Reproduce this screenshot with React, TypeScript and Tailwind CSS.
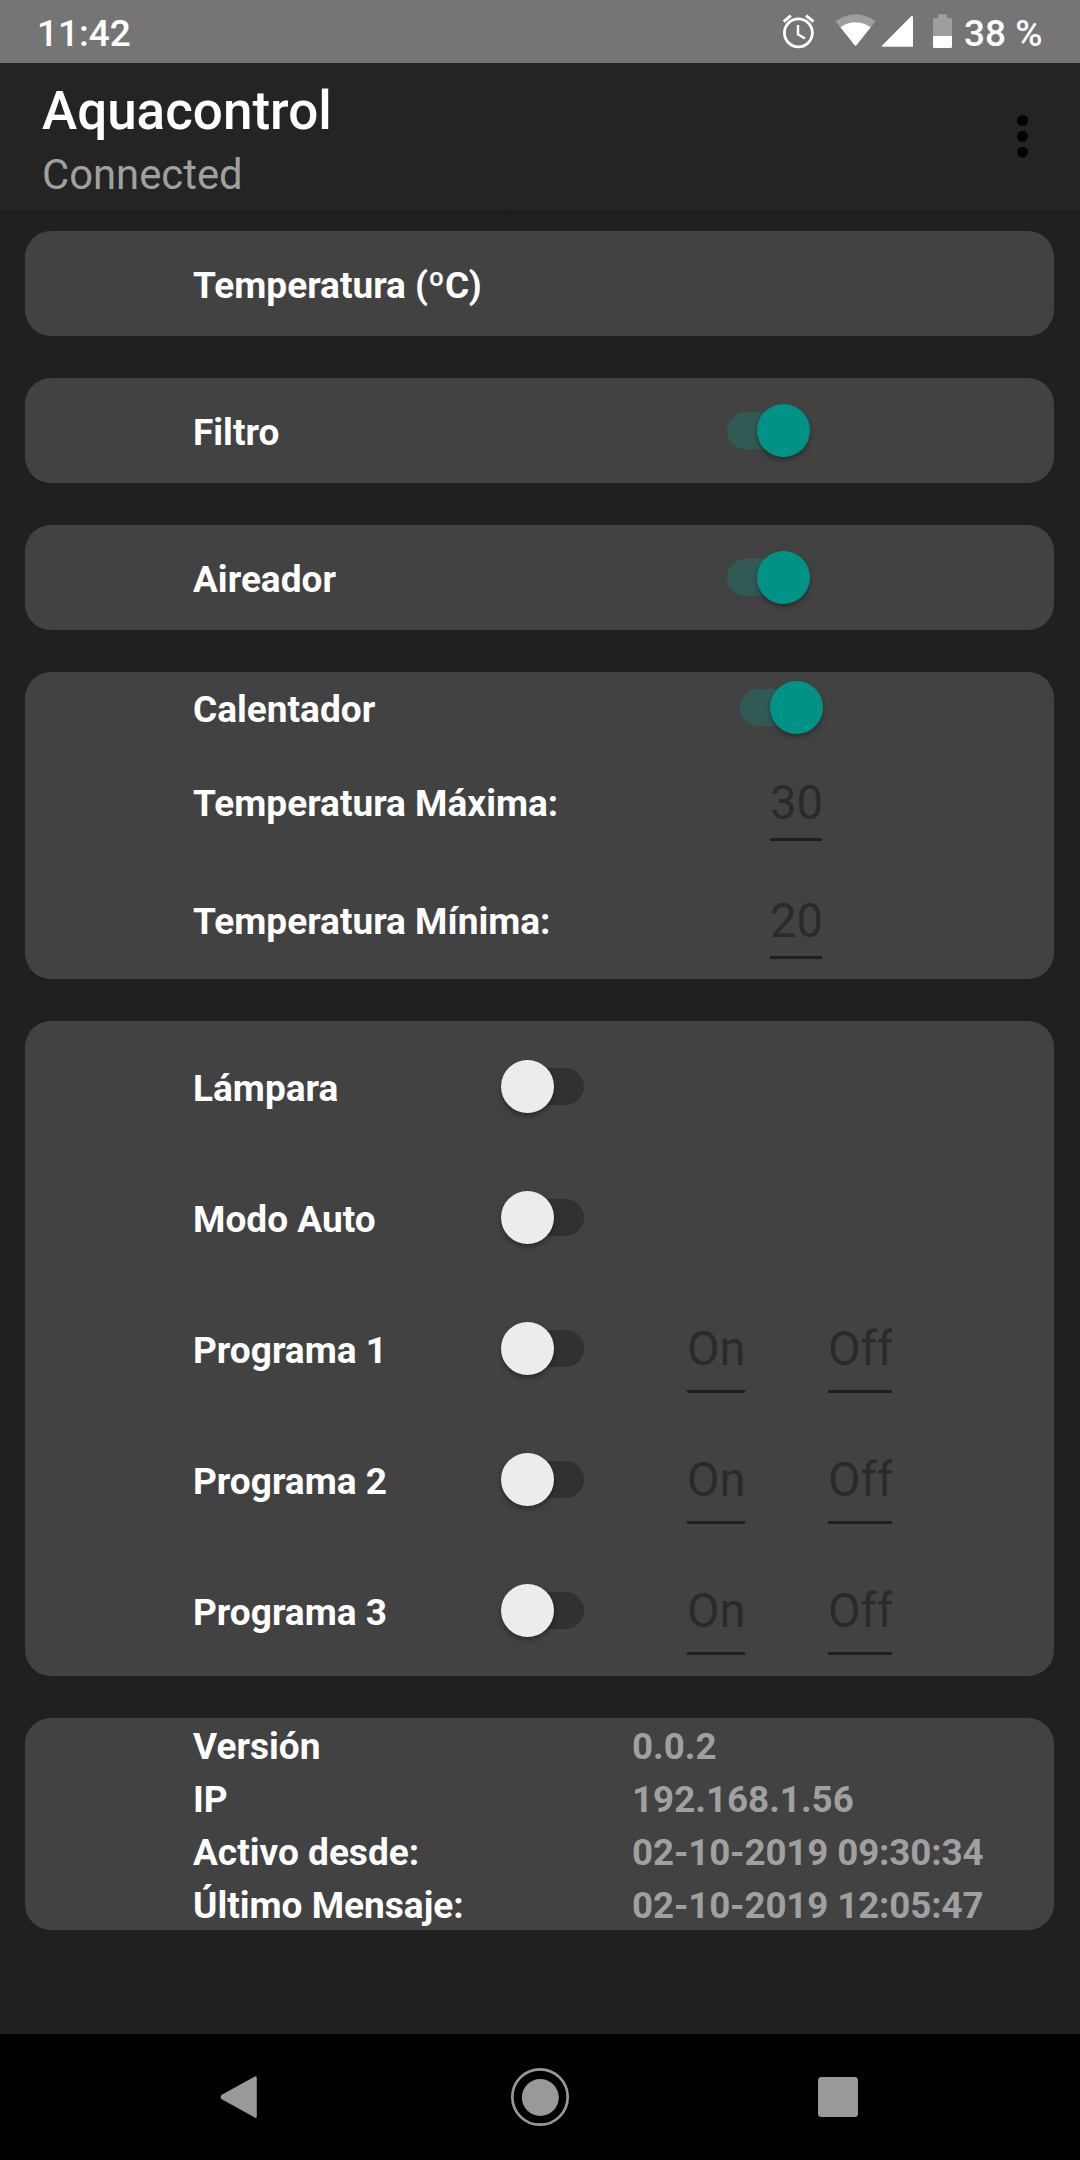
import type { ReactNode } from "react";

function StatusBar() {
  return (
    <div className="flex h-[63px] items-center bg-[#757575] pl-[37px] text-[37px] font-medium leading-[66px] text-white">
      <span className="flex-1 pt-[4px]">11:42</span>
      <svg className="h-[63px] w-[183px]" viewBox="776 0 183 63" fill="none">
        <circle cx="798.4" cy="32.8" r="14" stroke="#fff" strokeWidth="2.8" />
        <path d="M798 25v9.3l7 4.2" stroke="#fff" strokeWidth="2.4" />
        <path d="M783.7 21.6l7.2-6M813.5 21.6l-7.4-6" stroke="#fff" strokeWidth="3" />
        <path d="M835.7 21.4C846.5 12.2 864.700 12.2 875.500 21.4L870.800 27.2C861.700 20.7 849.300 20.700 840.400 27.200Z" fill="#9e9e9e" />
        <path d="M840.400 27.200C849.300 20.700 861.700 20.700 870.800 27.200L856.600 45.100Q855.500 46.300 854.400 45.100Z" fill="#fff" />
        <path d="M911.200 16.300Q913 15.500 913 17.500V46.800H883Q881.300 46.800 882.400 45.200Z" fill="#fff" />
        <path d="M938 14.300H947V18H950.500Q952 18 952 19.500V36H933V19.500Q933 18 934.500 18H938Z" fill="#9e9e9e" />
        <path d="M933 36H952V46.500Q952 48 950.500 48H934.500Q933 48 933 46.500Z" fill="#fff" />
      </svg>
      <span className="w-[121px] whitespace-nowrap pl-[5px] pt-[4px]">38 %</span>
    </div>
  );
}

function AppBar() {
  return (
    <header className="flex h-[147px] items-start justify-between bg-[#242424] pl-[42px] pr-[40px]">
      <div className="pt-[17px]">
        <h1 className="text-[53px] font-medium leading-[62px] text-white">Aquacontrol</h1>
        <p className="pt-[4px] text-[41.8px] leading-[58px] text-[#a0a0a0]">Connected</p>
      </div>
      <svg className="mt-[49px] h-[48px] w-[36px]" viewBox="0 0 36 48" fill="#030303">
        <circle cx="18.500" cy="8.500" r="5.500" />
        <circle cx="18.500" cy="24.300" r="5.500" />
        <circle cx="18.500" cy="40.200" r="5.500" />
      </svg>
    </header>
  );
}

function Card({ children }: { children: ReactNode }) {
  return <section className="rounded-[26px] bg-[#424242] pl-[168px]">{children}</section>;
}

function Label({ children }: { children: ReactNode }) {
  return (
    <span className="block whitespace-nowrap pt-[4px] text-[37.03px] font-bold leading-[43px] text-white">
      {children}
    </span>
  );
}

function Toggle({ on = false }: { on?: boolean }) {
  return (
    <div className="relative flex h-[53px] w-[83px] items-center">
      <div className={on ? "h-[37px] w-full rounded-full bg-[#315a55]" : "h-[37px] w-full rounded-full bg-[#313131]"} />
      <div
        className={
          on
            ? "absolute right-0 top-0 size-[53px] rounded-full bg-[#009385] shadow-[0_3px_5px_rgba(0,0,0,0.35)]"
            : "absolute left-0 top-0 size-[53px] rounded-full bg-[#ececec] shadow-[0_3px_5px_rgba(0,0,0,0.35)]"
        }
      />
    </div>
  );
}

function TempRow({ label, value }: { label: string; value: string }) {
  return (
    <div className="flex h-[118px] items-center">
      <div className="w-[577px] pb-[2px]">
        <Label>{label}</Label>
      </div>
      <div className="h-[78px] w-[52px] border-b-[3px] border-[#1f1f1f] pt-[12px] text-[47.25px] leading-[56px] text-[#2a2a2a]">
        {value}
      </div>
    </div>
  );
}

function LampRow({ label, schedule = false }: { label: string; schedule?: boolean }) {
  return (
    <div className="flex h-[131px] items-center">
      <div className="w-[308px]">
        <Label>{label}</Label>
      </div>
      <Toggle />
      {schedule && (
        <div className="flex gap-[83px] pl-[103px] text-[47.25px] leading-[56px] text-[#2a2a2a]">
          <div className="h-[89px] w-[58px] border-b-[3px] border-[#1f1f1f] pt-[17px]">On</div>
          <div className="h-[89px] w-[64px] overflow-hidden border-b-[3px] border-[#1f1f1f] pt-[17px]">Off</div>
        </div>
      )}
    </div>
  );
}

const version = [
  ["Versión", "0.0.2"],
  ["IP", "192.168.1.56"],
];

const times = [
  ["Activo desde:", "02-10-2019 09:30:34"],
  ["Último Mensaje:", "02-10-2019 12:05:47"],
];

function InfoRow({ label, children }: { label: string; children: ReactNode }) {
  return (
    <div className="flex h-[53px] whitespace-nowrap text-[37.03px] font-bold leading-[57px] text-white">
      <span className="w-[439px]">{label}</span>
      <span className="text-[36.75px] text-[#a0a0a0]">{children}</span>
    </div>
  );
}

export default function App() {
  return (
    <div className="flex h-[2160px] w-[1080px] flex-col overflow-hidden bg-[#202020] font-['Roboto',sans-serif]">
      <StatusBar />
      <AppBar />
      <main className="flex flex-1 flex-col gap-[42px] bg-linear-to-b from-[#1d1d1d] to-[#202020] to-[12px] pl-[25px] pr-[26px] pt-[21px]">
        <Card>
          <div className="flex h-[105px] items-center">
            <Label>Temperatura (ºC)</Label>
          </div>
        </Card>
        {["Filtro", "Aireador"].map((name) => (
          <Card key={name}>
            <div className="flex h-[105px] items-center">
              <div className="w-[534px]">
                <Label>{name}</Label>
              </div>
              <Toggle on />
            </div>
          </Card>
        ))}
        <Card>
          <div className="flex h-[71px] items-center">
            <div className="w-[547px]">
              <Label>Calentador</Label>
            </div>
            <Toggle on />
          </div>
          <TempRow label="Temperatura Máxima:" value="30" />
          <TempRow label="Temperatura Mínima:" value="20" />
        </Card>
        <Card>
          <LampRow label="Lámpara" />
          <LampRow label="Modo Auto" />
          <LampRow label="Programa 1" schedule />
          <LampRow label="Programa 2" schedule />
          <LampRow label="Programa 3" schedule />
        </Card>
        <Card>
          {version.map(([label, value]) => (
            <InfoRow key={label} label={label}>
              {value}
            </InfoRow>
          ))}
          {times.map(([label, value]) => (
            <InfoRow key={label} label={label}>
              <span className="tracking-[-0.14px]">{value}</span>
            </InfoRow>
          ))}
        </Card>
      </main>
      <nav className="flex h-[126px] items-center justify-center bg-black">
        <div className="flex w-[298px] justify-center">
          <svg className="size-[60px]" viewBox="0 0 60 60" fill="#999">
            <path d="M42.300 9.800Q44.800 8 44.800 11V49Q44.800 52 42.300 50.200L9.800 32.300Q7.300 30 9.800 27.700Z" />
          </svg>
        </div>
        <div className="flex w-[298px] justify-center">
          <svg className="size-[60px]" viewBox="0 0 60 60">
            <circle cx="30" cy="30" r="27.700" fill="none" stroke="#999" strokeWidth="2.700" />
            <circle cx="30.300" cy="30.500" r="18.500" fill="#999" />
          </svg>
        </div>
        <div className="flex w-[298px] justify-center">
          <svg className="size-[60px]" viewBox="0 0 60 60">
            <rect x="10" y="10" width="40" height="40" rx="3.500" fill="#999" />
          </svg>
        </div>
      </nav>
    </div>
  );
}
